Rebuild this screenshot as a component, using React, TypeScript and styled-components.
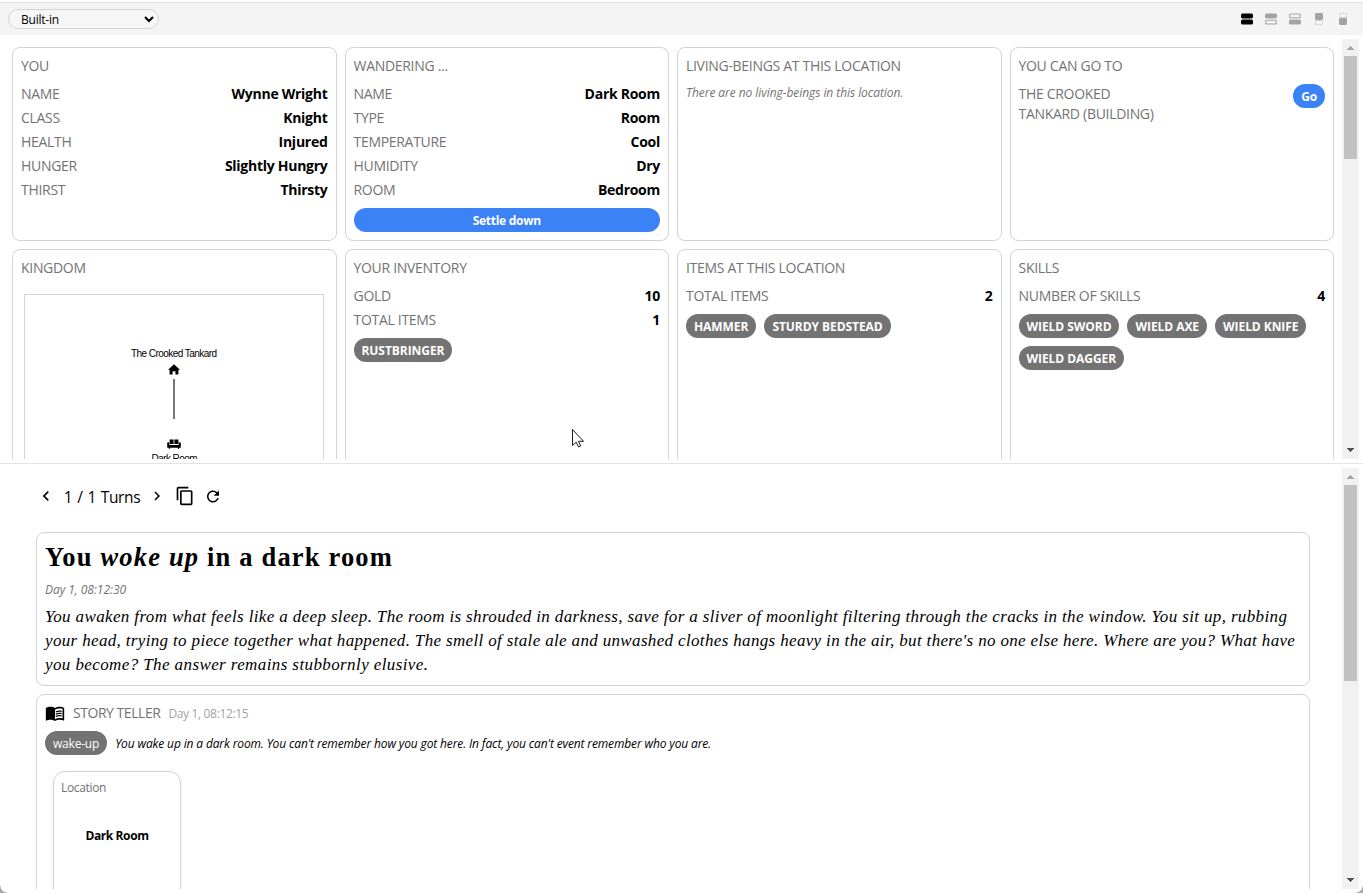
import React from 'react';
import styled, { createGlobalStyle, css } from 'styled-components';
import {
  MdChevronLeft,
  MdChevronRight,
  MdContentCopy,
  MdRefresh,
  MdMenuBook,
} from 'react-icons/md';

const GlobalStyle = createGlobalStyle`
  * { box-sizing: border-box; }
  body {
    margin: 0;
    background: #fff;
    color: #000;
    font-family: 'Open Sans', 'Noto Sans', sans-serif;
    font-size: 14px;
    line-height: 20px;
  }
`;

const Page = styled.div`
  position: relative;
  display: flex;
  flex-direction: column;
  width: 1363px;
  height: 893px;
  padding: 2px 0 4px;
  overflow: hidden;
`;

const WindowCorner = styled.i<{ $side: 'left' | 'right' }>`
  position: absolute;
  bottom: 0;
  ${(p) => p.$side}: 0;
  width: 7px;
  height: 7px;
  background: radial-gradient(
    circle at ${(p) => (p.$side === 'left' ? '100%' : '0')} 0,
    transparent 6px,
    #a9a9a9 7px
  );
`;

const Toolbar = styled.header`
  display: flex;
  align-items: center;
  justify-content: space-between;
  flex: none;
  height: 33px;
  padding: 0 12px 0 8px;
  border-top: 1px solid #e3e3e3;
  background: #f4f4f4;
`;

const Picker = styled.button`
  display: flex;
  align-items: center;
  justify-content: space-between;
  width: 151px;
  height: 20px;
  padding: 0 4px 0 12px;
  border: 1px solid #d3d3d3;
  border-radius: 10px;
  background: #f6f6f6;
  color: #000;
  font: 12px/18px 'Open Sans', sans-serif;
  letter-spacing: -0.22px;
`;

const PickerText = styled.span`
  padding-top: 2px;
`;

const LayoutSwitch = styled.div`
  display: flex;
  gap: 8px;
`;

const LayoutButton = styled.span<{ $active?: boolean }>`
  display: flex;
  align-items: center;
  justify-content: center;
  width: 16px;
  height: 16px;
  color: ${(p) => (p.$active ? '#000' : '#a3a3a3')};
`;

const Pane = styled.section<{ $height: number }>`
  display: flex;
  flex: none;
  height: ${(p) => p.$height}px;
  padding: 0 4px;
  overflow: hidden;
`;

const TopPane = styled(Pane)`
  margin-top: 4px;
`;

const Divider = styled.div`
  flex: none;
  height: 1px;
  margin: 4px 0;
  background: #e5e5e5;
`;

const CardGrid = styled.div`
  flex: 1;
  display: grid;
  grid-template-columns: repeat(4, minmax(0, 1fr));
  grid-template-rows: 194px 345px;
  gap: 8px;
  padding: 8px;
`;

const Card = styled.article`
  display: flex;
  flex-direction: column;
  gap: 8px;
  padding: 8px;
  border: 1px solid #d3d3d3;
  border-radius: 8px;
`;

const Label = styled.span`
  color: #737373;
  letter-spacing: -0.3px;
`;

const Stats = styled.div`
  display: flex;
  flex-direction: column;
  gap: 4px;
`;

const StatRow = styled.div`
  display: flex;
  justify-content: space-between;
`;

const Value = styled.b`
  letter-spacing: -0.27px;
  font-weight: 700;
`;

const Note = styled.em`
  height: 16px;
  color: #737373;
  font-size: 12px;
  line-height: 18px;
  letter-spacing: -0.06px;
`;

const Action = styled.button<{ $wide?: boolean }>`
  flex: none;
  height: 24px;
  padding: 2px 8px 0;
  border: 0;
  border-radius: 12px;
  background: #3b82f6;
  color: #fff;
  font: 700 12px/22px 'Open Sans', sans-serif;
  letter-spacing: -0.28px;
  width: ${(p) => (p.$wide ? '100%' : '32px')};
`;

const Exit = styled.div`
  display: flex;
  justify-content: space-between;
`;

const ExitName = styled(Label)`
  width: 150px;
`;

const Chips = styled.div`
  display: flex;
  flex-wrap: wrap;
  gap: 8px;
`;

const Chip = styled.span<{ $light?: boolean }>`
  height: 24px;
  padding: 0 8px;
  border-radius: 12px;
  background: #737373;
  color: #fff;
  font-size: 12px;
  line-height: 25px;
  white-space: nowrap;
  ${(p) =>
    p.$light
      ? css`
          font-weight: 400;
          letter-spacing: -0.2px;
        `
      : css`
          font-weight: 700;
          letter-spacing: -0.06px;
        `}
`;

const MapFrame = styled.svg`
  display: block;
  flex: none;
  width: 300px;
  height: 300px;
  margin: 8px auto 0 3px;
  border: 1px solid #d3d3d3;
  font: 10px 'Liberation Sans', Arial, sans-serif;
`;

const Bar = styled.div`
  display: flex;
  flex-direction: column;
  justify-content: space-between;
  flex: none;
  width: 17px;
  background: #f1f1f1;
`;

const BarArrow = styled.span<{ $down?: boolean }>`
  height: 17px;
  display: flex;
  align-items: center;
  justify-content: center;
  padding-bottom: ${(p) => (p.$down ? 2 : 0)}px;
  color: ${(p) => (p.$down ? '#505050' : '#a3a3a3')};
`;

const BarThumb = styled.span<{ $size: number }>`
  height: ${(p) => p.$size}px;
  margin: 0 2px auto;
  background: #c1c1c1;
`;

const Story = styled.div`
  flex: 1;
  display: flex;
  flex-direction: column;
  gap: 8px;
  padding: 16px 32px 0;
`;

const TurnNav = styled.nav`
  display: flex;
  align-items: center;
  height: 24px;
  margin-bottom: 16px;
  white-space: nowrap;
`;

const NavIcon = styled.span<{ $w: number }>`
  display: flex;
  justify-content: center;
  width: ${(p) => p.$w}px;
`;

const TurnCount = styled.span`
  width: 92px;
  padding-top: 1px;
  text-align: center;
  font-size: 15.5px;
  line-height: 24px;
  letter-spacing: -0.4px;
  word-spacing: 1.3px;
`;

const Headline = styled.h1`
  margin: 0;
  font: 700 26.5px/32px 'Liberation Serif', Georgia, serif;
  letter-spacing: 1.17px;
  white-space: nowrap;
`;

const Timestamp = styled.em`
  color: #737373;
  font-size: 12px;
  line-height: 17px;
  height: 16px;
  letter-spacing: -0.055px;
`;

const Prose = styled.p`
  margin: 0;
  font: italic 17px/24px 'Liberation Serif', Georgia, serif;
  white-space: nowrap;
`;

const Line = styled.span<{ $track: number }>`
  display: block;
  letter-spacing: ${(p) => p.$track}px;
`;

const TellerCard = styled(Card)`
  flex: none;
  height: 300px;
`;

const Teller = styled.div`
  display: flex;
  gap: 8px;
  height: 20px;
`;

const TellerName = styled(Label)`
  letter-spacing: -0.46px;
`;

const TellerTime = styled.span`
  color: #a3a3a3;
  font-size: 12px;
  line-height: 21px;
  letter-spacing: -0.34px;
`;

const EventRow = styled.div`
  display: flex;
  gap: 8px;
  height: 24px;
`;

const EventText = styled.em`
  font-size: 12px;
  line-height: 25px;
  letter-spacing: -0.14px;
  white-space: nowrap;
`;

const LocationCard = styled.div`
  display: flex;
  flex-direction: column;
  width: 128px;
  height: 176px;
  margin: 8px;
  padding: 8px 7px;
  border: 1px solid #d3d3d3;
  border-radius: 12px;
  box-shadow: 0 1px 3px rgba(0, 0, 0, 0.1);
  font-size: 12px;
  line-height: 16px;
`;

const LocationKind = styled.span`
  color: #737373;
  letter-spacing: -0.34px;
`;

const LocationName = styled.b`
  margin-top: 32px;
  text-align: center;
  letter-spacing: -0.4px;
`;

const Cursor = styled.svg`
  position: absolute;
  left: 571px;
  top: 428px;
`;

type LayoutKind = 'both' | 'top' | 'bottom' | 'topOnly' | 'bottomOnly';

const LayoutIcon = ({ kind }: { kind: LayoutKind }) => {
  if (kind === 'topOnly' || kind === 'bottomOnly') {
    const solidY = kind === 'topOnly' ? 2 : 7;
    const dashY = kind === 'topOnly' ? 9.5 : 2.5;
    return (
      <svg width="16" height="16" viewBox="0 0 16 16">
        <rect x="4.500" y={dashY} width="7" height="4" fill="none" stroke="#c8c8c8" strokeDasharray="2 1" />
        <rect x="4" y={solidY} width="8" height="7" rx="1.4" fill="currentColor" />
      </svg>
    );
  }
  const bar = (y: number, filled: boolean) =>
    filled ? (
      <rect x="2" y={y} width="12" height="5" rx="1.6" fill="currentColor" />
    ) : (
      <rect x="2.6" y={y + 0.6} width="10.8" height="3.8" rx="1" fill="#f4f4f4" stroke="currentColor" strokeWidth="1.1" />
    );
  return (
    <svg width="16" height="16" viewBox="0 0 16 16">
      {bar(2.4, kind !== 'bottom')}
      {bar(8.6, kind !== 'top')}
    </svg>
  );
};

const layouts: LayoutKind[] = ['both', 'top', 'bottom', 'topOnly', 'bottomOnly'];

const ScrollBar = ({ thumb }: { thumb: number }) => (
  <Bar>
    <BarArrow>
      <svg width="7" height="4" viewBox="0 0 7 4" shapeRendering="crispEdges">
        <path d="M3 0h1v1h1v1h1v1h1v1H0V3h1V2h1V1h1z" fill="currentColor" />
      </svg>
    </BarArrow>
    <BarThumb $size={thumb} />
    <BarArrow $down>
      <svg width="7" height="4" viewBox="0 0 7 4" shapeRendering="crispEdges">
        <path d="M0 0h7v1H6v1H5v1H4v1H3V3H2V2H1V1H0z" fill="currentColor" />
      </svg>
    </BarArrow>
  </Bar>
);

const StatList = ({ rows }: { rows: [string, string][] }) => (
  <Stats>
    {rows.map(([name, value]) => (
      <StatRow key={name}>
        <Label>{name}</Label>
        <Value>{value}</Value>
      </StatRow>
    ))}
  </Stats>
);

const ChipList = ({ names }: { names: string[] }) => (
  <Chips>
    {names.map((name) => (
      <Chip key={name}>{name}</Chip>
    ))}
  </Chips>
);

const KingdomMap = () => (
  <MapFrame viewBox="0 0 298 298">
    <text x="106" y="62" textLength="86">The Crooked Tankard</text>
    <path d="M149 69.3l-6 5.5h1.6v4.6h3v-3.2h2.8v3.2h3v-4.6h1.6z" />
    <path d="M149 84v40" stroke="#777" strokeWidth="2" />
    <path d="M144.600 144.500h4v4.500h-4zM149.400 144.500h4v4.500h-4z" />
    <path d="M142.6 147.6q1.6-.8 1.8 1v1.4h9.2v-1.4q.2-1.8 1.8-1 .8.6.4 1.6v3.6h-1.6v1h-1.4v-1h-7.6v1h-1.4v-1h-1.600v-3.600q-.4-1 .4-1.600z" />
    <text x="126.500" y="167" textLength="46">Dark Room</text>
  </MapFrame>
);

export default function App() {
  return (
    <Page>
      <GlobalStyle />
      <Toolbar>
        <Picker>
          <PickerText>Built-in</PickerText>
          <svg width="10" height="7" viewBox="0 0 10 7" fill="none" stroke="#000" strokeWidth="2">
            <path d="M1 1l4 4 4-4" />
          </svg>
        </Picker>
        <LayoutSwitch>
          {layouts.map((kind) => (
            <LayoutButton key={kind} $active={kind === 'both'}>
              <LayoutIcon kind={kind} />
            </LayoutButton>
          ))}
        </LayoutSwitch>
      </Toolbar>

      <TopPane $height={420}>
        <CardGrid>
          <Card>
            <Label>YOU</Label>
            <StatList
              rows={[
                ['NAME', 'Wynne Wright'],
                ['CLASS', 'Knight'],
                ['HEALTH', 'Injured'],
                ['HUNGER', 'Slightly Hungry'],
                ['THIRST', 'Thirsty'],
              ]}
            />
          </Card>
          <Card>
            <Label>WANDERING ...</Label>
            <StatList
              rows={[
                ['NAME', 'Dark Room'],
                ['TYPE', 'Room'],
                ['TEMPERATURE', 'Cool'],
                ['HUMIDITY', 'Dry'],
                ['ROOM', 'Bedroom'],
              ]}
            />
            <Action $wide>Settle down</Action>
          </Card>
          <Card>
            <Label>LIVING-BEINGS AT THIS LOCATION</Label>
            <Note>There are no living-beings in this location.</Note>
          </Card>
          <Card>
            <Label>YOU CAN GO TO</Label>
            <Exit>
              <ExitName>THE CROOKED TANKARD (BUILDING)</ExitName>
              <Action>Go</Action>
            </Exit>
          </Card>
          <Card>
            <Label>KINGDOM</Label>
            <KingdomMap />
          </Card>
          <Card>
            <Label>YOUR INVENTORY</Label>
            <StatList
              rows={[
                ['GOLD', '10'],
                ['TOTAL ITEMS', '1'],
              ]}
            />
            <ChipList names={['RUSTBRINGER']} />
          </Card>
          <Card>
            <Label>ITEMS AT THIS LOCATION</Label>
            <StatList rows={[['TOTAL ITEMS', '2']]} />
            <ChipList names={['HAMMER', 'STURDY BEDSTEAD']} />
          </Card>
          <Card>
            <Label>SKILLS</Label>
            <StatList rows={[['NUMBER OF SKILLS', '4']]} />
            <ChipList names={['WIELD SWORD', 'WIELD AXE', 'WIELD KNIFE', 'WIELD DAGGER']} />
          </Card>
        </CardGrid>
        <ScrollBar thumb={103} />
      </TopPane>

      <Divider />

      <Pane $height={421}>
        <Story>
          <TurnNav>
            <NavIcon $w={20}>
              <MdChevronLeft size={20} />
            </NavIcon>
            <TurnCount>1 / 1 Turns</TurnCount>
            <NavIcon $w={18}>
              <MdChevronRight size={20} />
            </NavIcon>
            <NavIcon $w={38}>
              <MdContentCopy size={20} />
            </NavIcon>
            <NavIcon $w={18}>
              <MdRefresh size={21} />
            </NavIcon>
          </TurnNav>
          <Card>
            <Headline>
              You <em>woke up</em> in a dark room
            </Headline>
            <Timestamp>Day 1, 08:12:30</Timestamp>
            <Prose>
              <Line $track={0.365}>
                You awaken from what feels like a deep sleep. The room is shrouded in darkness, save
                for a sliver of moonlight filtering through the cracks in the window. You sit up,
                rubbing
              </Line>
              <Line $track={0.346}>
                your head, trying to piece together what happened. The smell of stale ale and
                unwashed clothes hangs heavy in the air, but there's no one else here. Where are
                you? What have
              </Line>
              <Line $track={0.4}>you become? The answer remains stubbornly elusive.</Line>
            </Prose>
          </Card>
          <TellerCard>
            <Teller>
              <MdMenuBook size={20} />
              <TellerName>STORY TELLER</TellerName>
              <TellerTime>Day 1, 08:12:15</TellerTime>
            </Teller>
            <EventRow>
              <Chip $light>wake-up</Chip>
              <EventText>
                You wake up in a dark room. You can't remember how you got here. In fact, you can't
                event remember who you are.
              </EventText>
            </EventRow>
            <LocationCard>
              <LocationKind>Location</LocationKind>
              <LocationName>Dark Room</LocationName>
            </LocationCard>
          </TellerCard>
        </Story>
        <ScrollBar thumb={196} />
      </Pane>

      <Cursor width="13" height="20" viewBox="0 0 13 20">
        <path
          d="M1.500 1.500v16l3.700-3.300 2.300 4.800 2.200-1-2.200-4.700h5z"
          fill="#fff"
          stroke="#1a1a2a"
        />
      </Cursor>
      <WindowCorner $side="left" />
      <WindowCorner $side="right" />
    </Page>
  );
}
